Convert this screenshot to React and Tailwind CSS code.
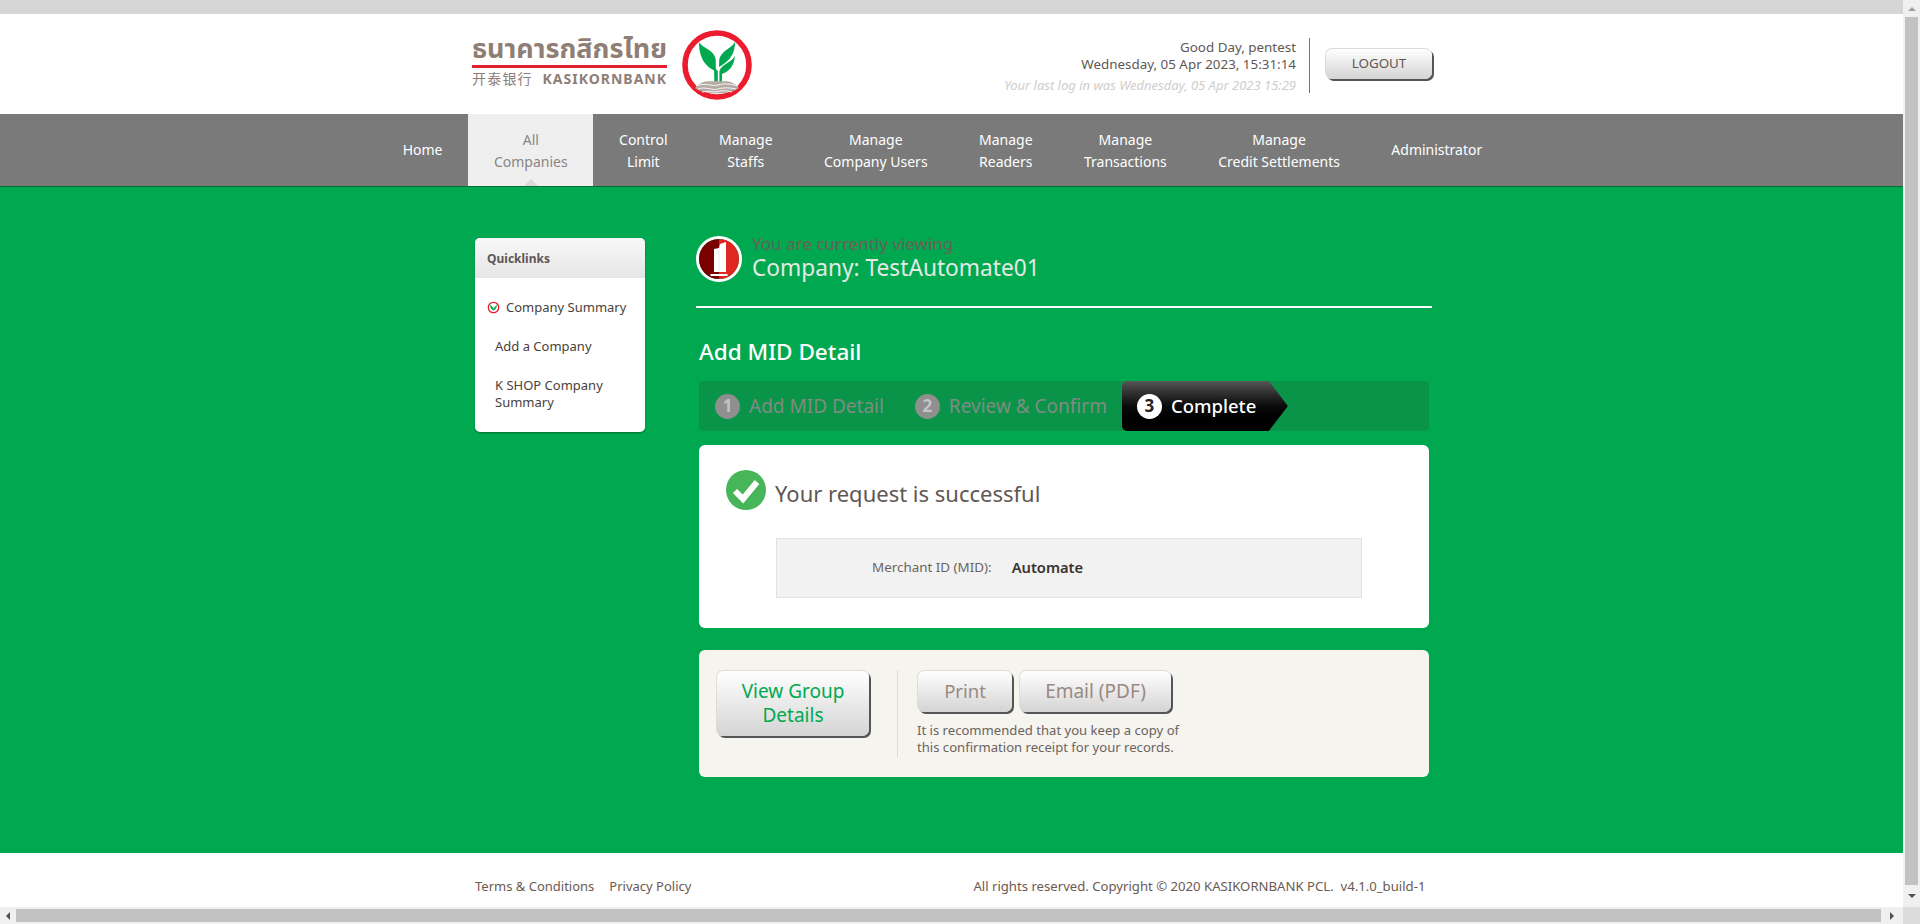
const F = "font-['Noto_Sans','Noto_Sans_CJK_SC',sans-serif]";

function Logo() {
  return (
    <div className="flex items-center translate-y-[1px]">
      <div className="w-[195px] flex flex-col self-start text-[#8f7e76]">
        <div className="h-[36px] text-[27px] leading-[42px] font-bold font-['Noto_Sans_Thai','Noto_Sans','DejaVu_Sans',sans-serif] whitespace-nowrap">ธนาคารกสิกรไทย</div>
        <div className="h-[3px] bg-[#e3202f]" />
        <div className="flex items-center justify-between h-[20px]">
          <span className="text-[14px] tracking-[1.2px] font-['Noto_Sans_CJK_SC',sans-serif]">开泰银行</span>
          <span className="text-[14px] font-bold tracking-[1px] font-['Noto_Sans',sans-serif]">KASIKORNBANK</span>
        </div>
      </div>
      <svg width="72" height="72" viewBox="0 0 72 72" className="ml-[14px]">
        <circle cx="36" cy="36" r="32" fill="#fff" stroke="#ec1c2e" strokeWidth="5.6" />
        <path d="M18 13 C22 20 33 20 34.8 31 L34.8 42 C27 39 18 32 18 13Z" fill="#00a94f" />
        <path d="M54 13 C51 19 41 21 38.3 30 L38 38 C45 34 54 28 54 13Z" fill="#00a94f" />
        <path d="M54 27 C51 33 41 35 38.4 42 L38.4 53 L41 53 L41 45 C47 43 53 38 54 27Z" fill="#00a94f" />
        <path d="M33 38 L36.8 42 L36.8 53 L33.4 53 Z" fill="#00a94f" />
        <path d="M14 59 C22 50 28 53 36 52 C44 53 50 50 58 59 C50 66 22 66 14 59Z" fill="#b5aaa4" />
        <path d="M15 57 C25 53 31 58 37 56 C44 54 50 55 57 57 M17 60 C25 57 31 62 37 60 C44 58 50 59 55 60 M21 63 C28 61 32 64 37 62.5 C43 61 47 62 51 63" fill="none" stroke="#fff" strokeWidth="0.9" />
      </svg>
    </div>
  );
}

function NavItem({ lines, active }) {
  return (
    <div className={`relative h-full px-[25.7px] flex flex-col items-center justify-center text-center text-[14px] leading-[22px] whitespace-nowrap ${lines.length > 1 ? "pt-[2px]" : ""} ${active ? "bg-[#efefef] text-[#8a8583]" : "text-white"}`}>
      {lines.map((l) => (
        <span key={l}>{l}</span>
      ))}
      {active && (
        <span className="absolute bottom-0 left-1/2 -ml-[7px] w-0 h-0 border-l-[7px] border-r-[7px] border-b-[7px] border-l-transparent border-r-transparent border-b-[#dcdad8]" />
      )}
    </div>
  );
}

function Step({ n, label }) {
  return (
    <div className="flex items-center">
      <span className="w-[25px] h-[25px] rounded-full bg-[#8f8f8f] text-[#c4c4c4] flex items-center justify-center text-[17px] font-bold">{n}</span>
      <span className="ml-[9px] text-[19px] text-[#7f8c83] whitespace-nowrap">{label}</span>
    </div>
  );
}

function GrayBtn({ children, className }) {
  return (
    <button className={`rounded-[7px] bg-gradient-to-b from-[#ffffff] to-[#d4d4d4] border-t border-l border-[#dedbd8] shadow-[2px_2px_0_#555] ${className}`}>
      {children}
    </button>
  );
}

function QuickIcon() {
  return (
    <svg width="13" height="13" viewBox="0 0 13 13" className="shrink-0">
      <circle cx="6.5" cy="6.5" r="5.2" fill="#fff" stroke="#ec1c2e" strokeWidth="1.3" />
      <path d="M3 3.5 C4 5 6 5 6.5 8 C8 5 9 5 10 3.5 C10 7 8 9 6.5 9.5 C5 9 3 7 3 3.5Z" fill="#00a94f" />
    </svg>
  );
}

export default function App() {
  const nav = [
    { lines: ["Home"] },
    { lines: ["All", "Companies"], active: true },
    { lines: ["Control", "Limit"] },
    { lines: ["Manage", "Staffs"] },
    { lines: ["Manage", "Company Users"] },
    { lines: ["Manage", "Readers"] },
    { lines: ["Manage", "Transactions"] },
    { lines: ["Manage", "Credit Settlements"] },
    { lines: ["Administrator"] },
  ];
  return (
    <div className={`w-[1920px] h-[924px] overflow-hidden flex ${F}`}>
      <div className="w-[1903px] flex flex-col">
        <div className="h-[14px] bg-[#d6d6d6]" />

        <header className="h-[100px] bg-white flex items-center pl-[472px]">
          <Logo />
          <div className="ml-[249px] w-[294px] h-[56px] pt-[6px] text-right text-[#5f5754] flex flex-col justify-center whitespace-nowrap">
            <div className="text-[13.4px] leading-[17px]">Good Day, pentest</div>
            <div className="text-[13.4px] leading-[17px]">Wednesday, 05 Apr 2023, 15:31:14</div>
            <div className="text-[13px] leading-[22px] italic text-[#cfcdcc] mt-[1px]">Your last log in was Wednesday, 05 Apr 2023 15:29</div>
          </div>
          <div className="ml-[13px] w-px h-[55px] bg-[#7c6f69] translate-y-[1px]" />
          <GrayBtn className="ml-[15px] w-[107px] h-[31px] text-[13.4px] text-[#5f5754] -translate-y-[1px]">LOGOUT</GrayBtn>
        </header>

        <nav className="h-[72px] bg-[#7a7a7a] flex pl-[377px] items-stretch">
          {nav.map((n) => (
            <NavItem key={n.lines.join()} {...n} />
          ))}
        </nav>

        <main className="h-[667px] bg-[#00a94f] border-t border-[#0b6b3a] pl-[475px] flex items-start">
          <aside className="mt-[51px] w-[170px] h-[194px] bg-white rounded-[5px] shadow-[0_1px_2px_rgba(0,0,0,0.35)] overflow-hidden">
            <div className="h-[40px] pt-[1px] bg-gradient-to-b from-[#f8f8f8] to-[#e6e6e6] pl-[12px] flex items-center text-[12px] font-bold text-[#5f5754]">Quicklinks</div>
            <ul className="pt-[21px] pl-[12px] pr-[8px] text-[13px] leading-[17px] text-[#4a3f3a]">
              <li className="flex items-center gap-[6px] h-[17px]"><QuickIcon />Company Summary</li>
              <li className="mt-[22px] pl-[8px]">Add a Company</li>
              <li className="mt-[22px] pl-[8px]">K SHOP Company Summary</li>
            </ul>
          </aside>

          <section className="ml-[51px] w-[736px]">
            <div className="mt-[49px] h-[72px] border-b-2 border-white flex items-start">
              <span className="w-[46px] h-[46px] rounded-full border-[3px] border-white overflow-hidden flex shrink-0">
                <svg width="40" height="40" viewBox="0 0 40 40">
                  <rect width="20" height="40" fill="#7a0000" />
                  <rect x="20" width="20" height="40" fill="#df2620" />
                  <path d="M15 10 L20 9 L21 5 L27 3 L27 33 L15 33Z" fill="#fff" />
                  <rect x="11.5" y="35" width="17" height="2" fill="#fff" />
                  <path d="M20 9 V33" stroke="#e2e2e2" strokeWidth="0.6" />
                </svg>
              </span>
              <div className="ml-[10px] -mt-[2px]">
                <div className="text-[17px] leading-[20px] text-[#6b5f58]">You are currently viewing</div>
                <div className="text-[22.7px] leading-[28px] text-[#e4e9e4]">Company: TestAutomate01</div>
              </div>
            </div>

            <h1 className="ml-[3px] mt-[30px] h-[28px] text-[22.5px] leading-[28px] font-medium text-white">Add MID Detail</h1>

            <div className="ml-[3px] mt-[15px] w-[730px] h-[50px] rounded-[4px] bg-[#0a9449] flex items-center pl-[16px]">
              <Step n="1" label="Add MID Detail" />
              <div className="ml-[31px]"><Step n="2" label="Review & Confirm" /></div>
              <div className="ml-[15px] w-[166px] h-[50px] rounded-l-[5px] bg-gradient-to-b from-[#575757] via-[#0b0b0b] to-black [clip-path:polygon(0_0,88.5%_0,100%_50%,88.5%_100%,0_100%)] flex items-center pl-[15px]">
                <span className="w-[25px] h-[25px] rounded-full bg-white text-[#222] flex items-center justify-center text-[17px] font-bold">3</span>
                <span className="ml-[9px] text-[18.5px] font-medium text-white">Complete</span>
              </div>
            </div>

            <div className="ml-[3px] mt-[14px] w-[730px] h-[183px] bg-white rounded-[6px] pt-[25px] pl-[27px]">
              <div className="flex items-center h-[40px]">
                <svg width="40" height="40" viewBox="0 0 40 40">
                  <circle cx="20" cy="20" r="20" fill="#47b55a" />
                  <path d="M9 21 L17 29 L31 12" fill="none" stroke="#fff" strokeWidth="6" />
                </svg>
                <span className="ml-[9px] mt-[6px] text-[22px] text-[#5f5754]">Your request is successful</span>
              </div>
              <div className="ml-[50px] mt-[28px] w-[586px] h-[60px] pb-[2px] bg-[#f2f2f2] border border-[#e2e2e2] flex items-center">
                <span className="ml-[95px] text-[13.4px] text-[#6b6360]">Merchant ID (MID):</span>
                <span className="ml-[20px] text-[14.7px] font-semibold text-[#3a3230]">Automate</span>
              </div>
            </div>

            <div className="ml-[3px] mt-[22px] w-[730px] h-[127px] bg-[#f6f4ef] rounded-[6px] pt-[20px] pl-[17px] flex items-start">
              <GrayBtn className="w-[153px] h-[66px] pb-[2px] text-[19px] leading-[24px] text-[#00a94f]">View Group<br />Details</GrayBtn>
              <div className="ml-[28px] w-px h-[87px] bg-[#dcdad6]" />
              <div className="ml-[19px]">
                <div className="flex gap-[7px]">
                  <GrayBtn className="w-[95px] h-[42px] pb-[1px] text-[18.5px] text-[#9a8980]">Print</GrayBtn>
                  <GrayBtn className="w-[152px] h-[42px] pb-[1px] text-[19px] text-[#9a8980]">Email (PDF)</GrayBtn>
                </div>
                <p className="mt-[10px] text-[13.1px] leading-[17px] text-[#6b6360] whitespace-nowrap">It is recommended that you keep a copy of<br />this confirmation receipt for your records.</p>
              </div>
            </div>
          </section>
        </main>

        <footer className="h-[54px] bg-white flex items-center pl-[475px] text-[13px] text-[#6b5a52] pt-[14px]">
          <span>Terms &amp; Conditions</span>
          <span className="ml-[15px]">Privacy Policy</span>
          <span className="ml-[282px] text-[13.15px] whitespace-pre">All rights reserved. Copyright © 2020 KASIKORNBANK PCL.  v4.1.0_build-1</span>
        </footer>

        <div className="h-[17px] bg-[#f0f0f0] flex items-center">
          <div className="h-[14px] w-[16px] flex items-center justify-center">
            <span className="w-0 h-0 border-y-[4px] border-r-[4px] border-y-transparent border-r-[#505050]" />
          </div>
          <div className="h-[13px] w-[1865px] bg-[#c2c2c2]" />
          <div className="flex-1 flex items-center justify-center">
            <span className="w-0 h-0 border-y-[4px] border-l-[4px] border-y-transparent border-l-[#505050]" />
          </div>
        </div>
      </div>

      <div className="w-[17px] bg-[#f0f0f0] flex flex-col items-center">
        <div className="h-[17px] flex items-center justify-center">
          <span className="w-0 h-0 border-x-[4px] border-b-[4px] border-x-transparent border-b-[#a0a0a0]" />
        </div>
        <div className="w-[13px] h-[868px] bg-[#c2c2c2]" />
        <div className="h-[22px] flex items-center justify-center">
          <span className="w-0 h-0 border-x-[4px] border-t-[4px] border-x-transparent border-t-[#505050]" />
        </div>
        <div className="w-full flex-1 bg-[#dcdcdc]" />
      </div>
    </div>
  );
}
